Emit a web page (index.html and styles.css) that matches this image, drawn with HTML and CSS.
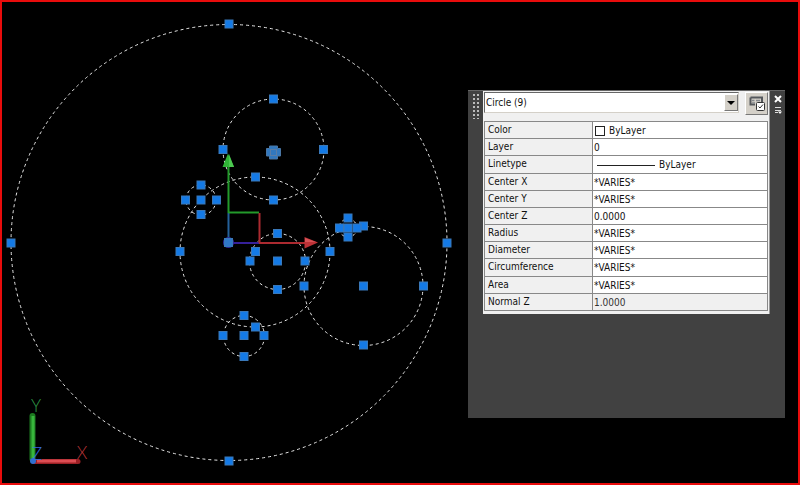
FILE: index.html
```
<!DOCTYPE html>
<html lang="en">
<head>
  <meta charset="UTF-8">
  <meta name="viewport" content="width=device-width, initial-scale=1.0">
  <title>Drawing - Properties</title>
  <link rel="stylesheet" href="styles.css">
</head>
<body>
  <main class="workspace">
    <svg class="drawing" viewBox="0 0 796 481" preserveAspectRatio="xMinYMin meet" role="img" aria-label="Selected circles">
      <defs>
        <rect id="grip" x="-4" y="-4" width="8" height="8"/>
      </defs>
      <g transform="translate(-2 -2)">
        <g class="circles">
          <circle cx="229" cy="242.5" r="218"/>
          <circle cx="273.5" cy="149.5" r="50.5"/>
          <circle cx="255" cy="252" r="75"/>
          <circle cx="201" cy="200" r="15"/>
          <circle cx="277.5" cy="261.5" r="28"/>
          <circle cx="363.5" cy="286" r="59.5"/>
          <circle cx="348" cy="228" r="9"/>
          <circle cx="244" cy="336" r="20.5"/>
        </g>

        <!-- origin gizmo -->
        <path d="M228.5 238V213" stroke="#24609a" stroke-width="2"/>
        <path d="M228.5 213V164M228.5 212.5H259" stroke="#239a2b" stroke-width="2" fill="none"/>
        <path d="M233 243H259" stroke="#36209a" stroke-width="2"/>
        <path d="M259.5 213V243M259 243H306" stroke="#ac2a30" stroke-width="2" fill="none"/>
        <path d="M228 153.5L222.5 167H234Z" fill="#30b437"/>
        <path d="M229 154V167H234Z" fill="#4cc850"/>
        <path d="M318 242.5L304.5 237V248.5Z" fill="#bd3237"/>
        <path d="M316 242L305 238V242Z" fill="#d75256"/>
        <circle cx="228.5" cy="242.5" r="5.5" fill="#2b2b9c"/>

        <g class="grips">
          <use href="#grip" x="229" y="24"/>
          <use href="#grip" x="229" y="461"/>
          <use href="#grip" x="11" y="243"/>
          <use href="#grip" x="447" y="243"/>

          <use href="#grip" x="273.5" y="99"/>
          <use href="#grip" x="223" y="149.5"/>
          <use href="#grip" x="323.5" y="149.5"/>
          <use href="#grip" x="273.5" y="200"/>

          <use href="#grip" x="255.5" y="177"/>
          <use href="#grip" x="180" y="251.5"/>
          <use href="#grip" x="330" y="251.5"/>
          <use href="#grip" x="255.5" y="251.5"/>
          <use href="#grip" x="255.5" y="327"/>

          <use href="#grip" x="201" y="185"/>
          <use href="#grip" x="185.5" y="200"/>
          <use href="#grip" x="201" y="200"/>
          <use href="#grip" x="216.5" y="200"/>
          <use href="#grip" x="201" y="214.5"/>

          <use href="#grip" x="277.5" y="233.5"/>
          <use href="#grip" x="250" y="261"/>
          <use href="#grip" x="277.5" y="261"/>
          <use href="#grip" x="305" y="261"/>
          <use href="#grip" x="277.5" y="289.5"/>

          <use href="#grip" x="363.5" y="226"/>
          <use href="#grip" x="304" y="286"/>
          <use href="#grip" x="363.5" y="286"/>
          <use href="#grip" x="423.5" y="286"/>
          <use href="#grip" x="363.5" y="345"/>

          <use href="#grip" x="348" y="218"/>
          <use href="#grip" x="339.5" y="228"/>
          <use href="#grip" x="348" y="228"/>
          <use href="#grip" x="357" y="228"/>
          <use href="#grip" x="348" y="237"/>

          <use href="#grip" x="244" y="315.5"/>
          <use href="#grip" x="223" y="335.5"/>
          <use href="#grip" x="244" y="335.5"/>
          <use href="#grip" x="264" y="335.5"/>
          <use href="#grip" x="244" y="356.5"/>
        </g>
        <rect class="origin" x="224.5" y="238.5" width="8" height="8"/>

        <!-- overlapping grips of the smallest circle -->
        <path d="M269.5 146H277.5V148.5H280.5V156H277.5V159H269.5V156H266.5V148.5H269.5Z" fill="#3178bf" stroke="#4a76a4"/>
        <path d="M270 149.5H277M270.5 149V156M276.500 149V156M270 155.5H277" stroke="#5a7da6" fill="none"/>

        <!-- UCS icon -->
        <path d="M32.5 416V459" stroke="#1c7a20" stroke-width="6" stroke-linecap="round"/>
        <path d="M33 416V458" stroke="#38b53c" stroke-width="3"/>
        <path d="M34 461.5H78" stroke="#9c2025" stroke-width="5" stroke-linecap="round"/>
        <path d="M37 461H76" stroke="#dc4d53" stroke-width="3"/>
        <circle cx="33" cy="461" r="3" fill="#2f6fd0"/>
        <text class="axis axis-y" x="36" y="412" text-anchor="middle">Y</text>
        <text class="axis axis-x" x="82" y="459" text-anchor="middle">X</text>
        <text class="axis axis-z" x="37" y="460" text-anchor="middle">Z</text>
      </g>
    </svg>

    <section class="palette" aria-label="Properties">
      <div class="grabber"><span class="dots"></span></div>

      <div class="properties">
        <div class="toolbar">
          <div class="picker">
            <select aria-label="Selected objects">
              <option>Circle (9)</option>
            </select>
            <span class="arrow"><svg width="8" height="4" viewBox="0 0 8 4"><path d="M0 0H8L4 4Z"/></svg></span>
          </div>
          <button type="button" class="quick-select" aria-label="Quick select">
            <svg width="18" height="18" viewBox="0 0 18 18" fill="none">
              <path d="M2.5 2.5H14V7M2.5 2.5V9.5H7" stroke="#55585c" stroke-width="2"/>
              <path d="M4 5.5H6.5M8 5.5H12M4 8H7" stroke="#85898d" stroke-width="1.5"/>
              <rect x="8.5" y="7.5" width="8" height="8" rx="1" fill="#fff" stroke="#333"/>
              <path d="M10.5 11.5L12 13L15 9.5" stroke="#333"/>
            </svg>
          </button>
        </div>

        <table class="grid">
          <tr>
            <th scope="row">Color</th>
            <td><span class="value"><i class="swatch"></i>ByLayer</span></td>
          </tr>
          <tr>
            <th scope="row"><label for="layer">Layer</label></th>
            <td><input type="text" id="layer" value="0"></td>
          </tr>
          <tr>
            <th scope="row">Linetype</th>
            <td><span class="value"><i class="line"></i>ByLayer</span></td>
          </tr>
          <tr>
            <th scope="row"><label for="centerX">Center X</label></th>
            <td><input type="text" id="centerX" value="*VARIES*"></td>
          </tr>
          <tr>
            <th scope="row"><label for="centerY">Center Y</label></th>
            <td><input type="text" id="centerY" value="*VARIES*"></td>
          </tr>
          <tr>
            <th scope="row"><label for="centerZ">Center Z</label></th>
            <td><input type="text" id="centerZ" value="0.0000"></td>
          </tr>
          <tr>
            <th scope="row"><label for="radius">Radius</label></th>
            <td><input type="text" id="radius" value="*VARIES*"></td>
          </tr>
          <tr>
            <th scope="row"><label for="diameter">Diameter</label></th>
            <td><input type="text" id="diameter" value="*VARIES*"></td>
          </tr>
          <tr>
            <th scope="row"><label for="circumference">Circumference</label></th>
            <td><input type="text" id="circumference" value="*VARIES*"></td>
          </tr>
          <tr>
            <th scope="row"><label for="area">Area</label></th>
            <td><input type="text" id="area" value="*VARIES*"></td>
          </tr>
          <tr class="readonly">
            <th scope="row"><label for="normalZ">Normal Z</label></th>
            <td><input type="text" id="normalZ" value="1.0000" readonly></td>
          </tr>
        </table>
      </div>

      <div class="window-buttons">
        <button type="button" aria-label="Close">
          <svg width="8" height="8" viewBox="0 0 8 8"><path d="M1 1L7 7M7 1L1 7" stroke="#fff" stroke-width="2"/></svg>
        </button>
        <button type="button" aria-label="Palette menu">
          <svg width="8" height="8" viewBox="0 0 8 8"><path d="M1 1.5H7M1 4.5H7M1 6.5H4" stroke="#ddd"/><path d="M4 5.5H8L6 8Z" fill="#fff"/></svg>
        </button>
      </div>
    </section>
  </main>
</body>
</html>
```
FILE: styles.css
```
* { box-sizing: border-box; }
body { margin: 0; background: #000; color: #111; font: 10px/14px "DejaVu Sans Condensed", "DejaVu Sans", sans-serif; }
button, input, select { font: inherit; color: inherit; margin: 0; }

.workspace { position: relative; min-height: 100vh; border: 2px solid #e80c0c; overflow: hidden; }
.drawing { display: block; width: 100%; }
.circles { fill: none; stroke: #e8e8e8; stroke-width: 1; stroke-dasharray: 3 3; }
.grips { fill: #147ae6; stroke: #3a78b8; stroke-width: 1; }
.origin { fill: #2f78c8; stroke: #3a78b8; }
.axis { font: 300 17px Lato, sans-serif; }
.axis-x { fill: #b83438; }
.axis-y { fill: #2f9a48; }
.axis-z { fill: #3468e0; }

/* floating properties window */
.palette { position: absolute; top: 88px; right: 13px; width: 317px; min-height: 328px; display: grid; grid-template-columns: 15px 1fr 15px; align-items: start; background: #414141; border-top: 1px solid #666; }
.grabber { display: flex; justify-content: center; padding-top: 2px; }
.dots { width: 8px; height: 26px; background: radial-gradient(circle, #bbb 1px, transparent 1px) 0 0 / 4px 4px; }

.properties { background: #f0f0f0; padding: 1px 1px 3px; border-right: 1px solid #999; }
.toolbar { display: flex; gap: 6px; align-items: flex-start; margin-bottom: 6px; }
.picker { position: relative; flex: 1; }
.picker select { appearance: none; display: block; width: 100%; height: 21px; padding: 0 20px 0 1px; background: #fff; border: 1px solid #d4d0c8; border-top-color: #666; border-left-color: #666; border-radius: 0; }
.arrow { position: absolute; top: 2px; right: 1px; width: 14px; height: 17px; display: grid; place-items: center; background: #d4d0c8; border: 1px solid #777; border-top-color: #fff; border-left-color: #fff; pointer-events: none; }
.quick-select { width: 23px; height: 23px; padding: 0; display: grid; place-items: center; background: #d4d0c8; border: 1px solid #777; border-top-color: #fff; border-left-color: #fff; }

.grid { width: 100%; height: 190px; border-collapse: collapse; table-layout: fixed; background: #fff; }
.grid th, .grid td { padding: 0 0 0 3px; border: 1px solid #888; text-align: left; vertical-align: middle; font-weight: normal; }
.grid th { width: 108px; background: #f0f0f0; }
.grid td { padding: 2px 0 0 1px; }
.grid input { display: block; width: 100%; height: 14px; padding: 0; border: 0; background: none; }
.value { display: flex; align-items: center; gap: 4px; }
.swatch { width: 10px; height: 10px; margin-left: 1px; border: 1px solid #222; }
.line { width: 58px; height: 1px; margin-left: 3px; background: #222; }
.readonly { background: #f0f0f0; color: #333; }
.readonly th { color: #111; }

.window-buttons { display: grid; justify-items: center; gap: 3px; padding-top: 4px; }
.window-buttons button { display: block; padding: 0; border: 0; background: none; line-height: 0; }
```
